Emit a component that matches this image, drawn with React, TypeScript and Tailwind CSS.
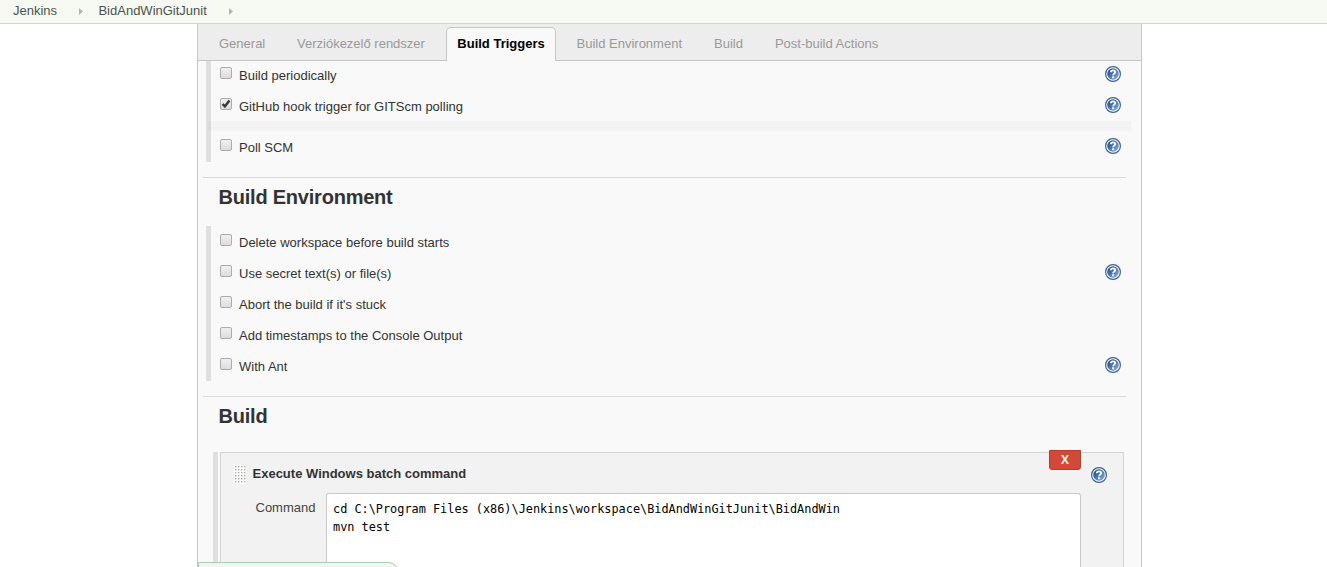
import React from "react";

function Checkbox({ checked = false }: { checked?: boolean }) {
  return (
    <svg width="12" height="12" viewBox="0 0 12 12" className="mt-2 shrink-0">
      <defs>
        <linearGradient id="boxFill" x1="0" y1="0" x2="0" y2="1">
          <stop offset="0.2" stopColor="#ededed" />
          <stop offset="1" stopColor="#dcdcdc" />
        </linearGradient>
      </defs>
      <rect x="0.5" y="0.5" width="11" height="11" rx="1.5" fill="url(#boxFill)" stroke="#acacac" />
      {checked && <path d="M2.6 6 4.9 8.4 9.4 2.6" fill="none" stroke="#3a3a3a" strokeWidth="2.5" />}
    </svg>
  );
}

function HelpIcon() {
  return (
    <svg width="16" height="16" viewBox="0 0 16 16" className="block shrink-0">
      <defs>
        <linearGradient id="helpFill" x1="0" y1="0" x2="1" y2="1">
          <stop offset="0.15" stopColor="#23508f" />
          <stop offset="0.5" stopColor="#4d78b4" />
          <stop offset="0.9" stopColor="#86a9d6" />
        </linearGradient>
      </defs>
      <circle cx="8" cy="8" r="7.4" fill="#fff" stroke="#38619c" strokeWidth="1.2" />
      <circle cx="8" cy="8" r="5.8" fill="url(#helpFill)" />
      <path
        d="M5.8 6.3C5.9 4.9 6.7 4.3 8 4.3s2.2.7 2.2 1.8c0 1.6-2.1 1.5-2.1 3.2"
        fill="none"
        stroke="#fff"
        strokeWidth="1.8"
      />
      <rect x="7.1" y="10.3" width="2" height="1.9" fill="#fff" />
    </svg>
  );
}

function OptionRow({ label, checked, help }: { label: string; checked?: boolean; help?: boolean }) {
  return (
    <div className="flex h-[31px] items-start pl-[9px]">
      <Checkbox checked={checked} />
      <span className="ml-[7px] mt-[9px] grow leading-4">{label}</span>
      {help && (
        <span className="mr-[20px] mt-[7px]">
          <HelpIcon />
        </span>
      )}
    </div>
  );
}

function SectionTitle({ title }: { title: string }) {
  return (
    <div className="ml-[5px] mr-[15px] h-[49px] border-t border-[#dadada] pl-[15.5px] pt-[7px]">
      <h2 className="text-[20px] font-bold leading-6 tracking-[-0.22px]">{title}</h2>
    </div>
  );
}

function Crumb({ label }: { label: string }) {
  return (
    <>
      <span className="leading-4">{label}</span>
      <svg width="4" height="7" viewBox="0 0 4 7">
        <path d="M0 0 4 3.5 0 7z" fill="#b2b4b0" />
      </svg>
    </>
  );
}

function DragHandle() {
  return (
    <svg width="12" height="19" className="mt-3 shrink-0">
      <defs>
        <pattern id="grip" width="3" height="3" patternUnits="userSpaceOnUse">
          <rect width="3" height="3" fill="#fff" />
          <rect x="1" y="1" width="1.4" height="1.4" fill="#aaa" />
        </pattern>
      </defs>
      <rect width="12" height="19" fill="url(#grip)" />
    </svg>
  );
}

const TABS_AFTER = ["Build Environment", "Build", "Post-build Actions"];

export default function App() {
  return (
    <div className="relative flex h-[567px] w-[1327px] flex-col overflow-hidden bg-white font-['Liberation_Sans',Arial,sans-serif] text-[13px] text-[#333]">
      <header className="flex h-6 shrink-0 items-start border-b border-[#d3d7cf] bg-[#f6faf2] pl-[13px] pt-[3px]">
        <nav className="flex gap-x-[15.7px] text-[#4f524c] [&>svg]:ml-[6px] [&>svg]:mt-[5px]">
          <Crumb label="Jenkins" />
          <Crumb label="BidAndWinGitJunit" />
        </nav>
      </header>

      <main className="ml-[197px] flex w-[945px] grow flex-col border-x border-[#c6c6c6] bg-[#f9f9f9]">
        <div className="flex h-[37px] shrink-0 items-end border-b border-[#c6c6c6] bg-[#ededed] text-[#999]">
          <div className="flex h-[34px] pt-[10px] leading-4">
            <span className="ml-[21px] w-[78px]">General</span>
            <span className="w-[149px]">Verziókezelő rendszer</span>
          </div>
          <div className="-mb-px h-[34px] w-[110px] shrink-0 rounded-t-[5px] border border-b-0 border-[#c6c6c6] bg-[#f9f9f9] pt-[8px] text-center font-bold leading-4 text-black">
            Build Triggers
          </div>
          <div className="flex h-[34px] gap-8 pl-[20.5px] pt-[10px] leading-4">
            {TABS_AFTER.map((tab) => (
              <span key={tab}>{tab}</span>
            ))}
          </div>
        </div>

        <div className="h-[101px] shrink-0 overflow-hidden pl-2">
          <div className="-mt-[2px] border-l-[5px] border-[#dfdfdf]">
            <OptionRow label="Build periodically" help />
            <OptionRow label="GitHub hook trigger for GITScm polling" checked help />
            <div className="-ml-[3px] mr-[10px] h-[10px] bg-black/[0.025]" />
            <OptionRow label="Poll SCM" help />
          </div>
        </div>

        <div className="h-[15px] shrink-0" />
        <SectionTitle title="Build Environment" />
        <div className="ml-2 shrink-0 border-l-[5px] border-[#dfdfdf]">
          <OptionRow label="Delete workspace before build starts" />
          <OptionRow label="Use secret text(s) or file(s)" help />
          <OptionRow label="Abort the build if it's stuck" />
          <OptionRow label="Add timestamps to the Console Output" />
          <OptionRow label="With Ant" help />
        </div>

        <div className="h-[15px] shrink-0" />
        <SectionTitle title="Build" />

        <div className="ml-[15px] mr-[17px] mt-[7px] flex h-[115px] shrink-0">
          <div className="w-[5px] bg-[#dfdfdf]" />
          <div className="ml-[2px] flex grow flex-col border border-b-0 border-[#d4d4d4] bg-[#f2f2f2]">
            <div className="flex h-10 shrink-0 items-start pl-[13px]">
              <DragHandle />
              <b className="ml-[6.5px] mt-[13px] grow leading-4">Execute Windows batch command</b>
              <button className="-mt-[3px] h-[20px] w-8 rounded-b-[3px] border border-[#bd3a2b] bg-[#d24939] font-['Open_Sans',sans-serif] text-[12px] font-bold leading-[18px] text-[#f4e9e7]">
                X
              </button>
              <span className="ml-[10px] mr-4 mt-[14px]">
                <HelpIcon />
              </span>
            </div>
            <div className="flex h-[74px] shrink-0 items-start pl-[34px]">
              <span className="mt-[7px] w-[71px] pl-[0.5px] leading-4 text-[#444]">Command</span>
              <div className="h-[74px] w-[755px] whitespace-pre rounded-t-[3px] border border-b-0 border-[#c8c8c8] bg-white pl-[6px] pt-[6px] font-['DejaVu_Sans_Mono',monospace] text-[11.87px] leading-[18px] text-black">
                {"cd C:\\Program Files (x86)\\Jenkins\\workspace\\BidAndWinGitJunit\\BidAndWin\nmvn test"}
              </div>
            </div>
          </div>
        </div>
      </main>

      <div className="absolute left-[198px] top-[562px] h-10 w-[200px] rounded-tr-[9px] border border-[#a9cdb9] bg-[#f3f6f0]" />
    </div>
  );
}
